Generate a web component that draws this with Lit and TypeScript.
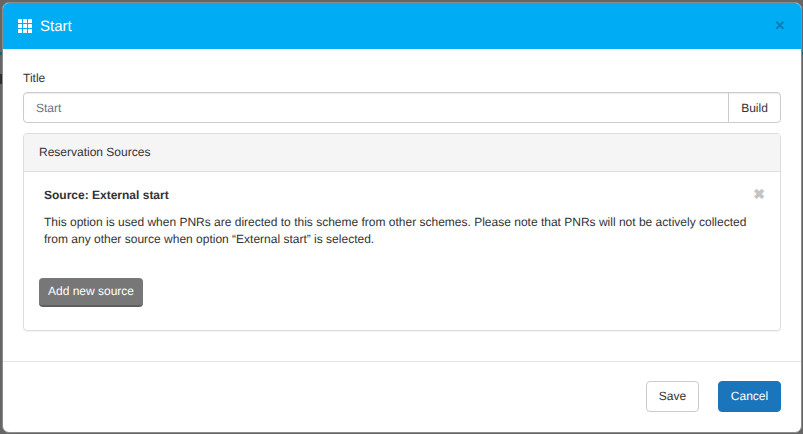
import { LitElement, html, css } from "lit";
import { customElement } from "lit/decorators.js";

@customElement("app-root")
export class AppRoot extends LitElement {
  static styles = css`
    :host {
      display: block;
      width: 803px;
      height: 434px;
      box-sizing: border-box;
      padding: 2px 1px 1px 2px;
      background:
        linear-gradient(#17607f, #17607f) 0 52px / 2px 3px no-repeat,
        linear-gradient(#2f2f2f, #2f2f2f) 0 74px / 2px 10px no-repeat,
        linear-gradient(#17607f, #17607f) 802px 52px / 1px 3px no-repeat,
        #666;
      font-family: "Liberation Sans", Arial, sans-serif;
      font-size: 12px;
      line-height: 17px;
      color: #333;
      overflow: hidden;
      text-rendering: geometricPrecision;
    }
    .modal {
      height: 100%;
      box-sizing: border-box;
      background: #fff;
      border: 1px solid #8c8c8c;
      border-radius: 7px;
      display: flex;
      flex-direction: column;
      overflow: hidden;
    }
    .header {
      height: 46px;
      flex: none;
      background: #00acf4;
      color: #fff;
      display: flex;
      align-items: center;
      padding: 0 15px;
      font-size: 15px;
      gap: 7px;
    }
    .header svg { display: block; flex: none; }
    .header .name { flex: 1; }
    .close {
      font-size: 17px;
      font-weight: bold;
      color: #0a7fb5;
      line-height: 17px;
      margin-top: -2px;
      margin-right: 1px;
    }
    .body {
      flex: 1;
      padding: 20px 20px 0;
    }
    label {
      display: block;
      height: 22px;
      line-height: 17px;
      padding-top: 1px;
    }
    .group {
      display: flex;
      height: 31px;
      box-sizing: border-box;
      border: 1px solid #ccc;
      border-radius: 4px;
      box-shadow: inset 0 1px 1px rgba(0, 0, 0, 0.075);
    }
    .value {
      flex: 1;
      padding: 1px 12px 0;
      line-height: 29px;
      color: #6b7280;
    }
    .addon {
      width: 51px;
      border-left: 1px solid #ccc;
      text-align: center;
      padding-top: 1px;
      line-height: 29px;
    }
    .panel {
      margin-top: 10px;
      height: 198px;
      box-sizing: border-box;
      border: 1px solid #ddd;
      border-radius: 4px;
      box-shadow: 0 1px 1px rgba(0, 0, 0, 0.05);
      display: flex;
      flex-direction: column;
    }
    .panel-head {
      height: 38px;
      box-sizing: border-box;
      flex: none;
      background: #f5f5f5;
      border-bottom: 1px solid #ddd;
      border-radius: 3px 3px 0 0;
      padding: 0 15px;
      line-height: 36px;
    }
    .panel-body { padding: 15px 15px 0; }
    .source { padding: 0 5px; position: relative; }
    .source h4 {
      margin: 0 0 10px;
      font-size: 12px;
      line-height: 17px;
      font-weight: bold;
    }
    .source p { margin: 0; }
    .remove {
      position: absolute;
      top: 0;
      right: 0;
      font-size: 14px;
      font-weight: bold;
      color: #c4c4c4;
      line-height: 14px;
    }
    .add {
      margin-top: 30px;
      width: 104px;
      height: 29px;
      box-sizing: border-box;
      background: #777;
      border-bottom: 2px solid #5e5e5e;
      border-radius: 4px;
      color: #fff;
      text-align: center;
      line-height: 26px;
    }
    .footer {
      flex: none;
      height: 71px;
      box-sizing: border-box;
      border-top: 1px solid #e5e5e5;
      padding: 19px 20px 0 0;
      display: flex;
      justify-content: flex-end;
      gap: 19px;
    }
    .btn {
      height: 31px;
      box-sizing: border-box;
      border: 1px solid #ccc;
      border-radius: 4px;
      text-align: center;
      line-height: 29px;
      background: #fff;
    }
    .save { width: 53px; }
    .cancel {
      width: 63px;
      background: #1b75bb;
      border-color: #1b75bb;
      color: #fff;
    }
  `;

  render() {
    const cells = [0, 5, 10];
    return html`
      <div class="modal">
        <div class="header">
          <svg width="15" height="14" viewBox="0 0 15 14" fill="#fff">
            ${cells.map((y) =>
              cells.map(
                (x) => html`<svg x="${x}" y="${y}" width="4" height="4"><rect width="4" height="4" rx="0.5"></rect></svg>`
              )
            )}
          </svg>
          <span class="name">Start</span>
          <span class="close">×</span>
        </div>
        <div class="body">
          <label>Title</label>
          <div class="group">
            <div class="value">Start</div>
            <div class="addon">Build</div>
          </div>
          <div class="panel">
            <div class="panel-head">Reservation Sources</div>
            <div class="panel-body">
              <div class="source">
                <h4>Source: External start</h4>
                <span class="remove">✖</span>
                <p>
                  This option is used when PNRs are directed to this scheme from other schemes. Please note that PNRs will not be actively collected from any other source when option “External start” is selected.
                </p>
              </div>
              <div class="add">Add new source</div>
            </div>
          </div>
        </div>
        <div class="footer">
          <div class="btn save">Save</div>
          <div class="btn cancel">Cancel</div>
        </div>
      </div>
    `;
  }
}
